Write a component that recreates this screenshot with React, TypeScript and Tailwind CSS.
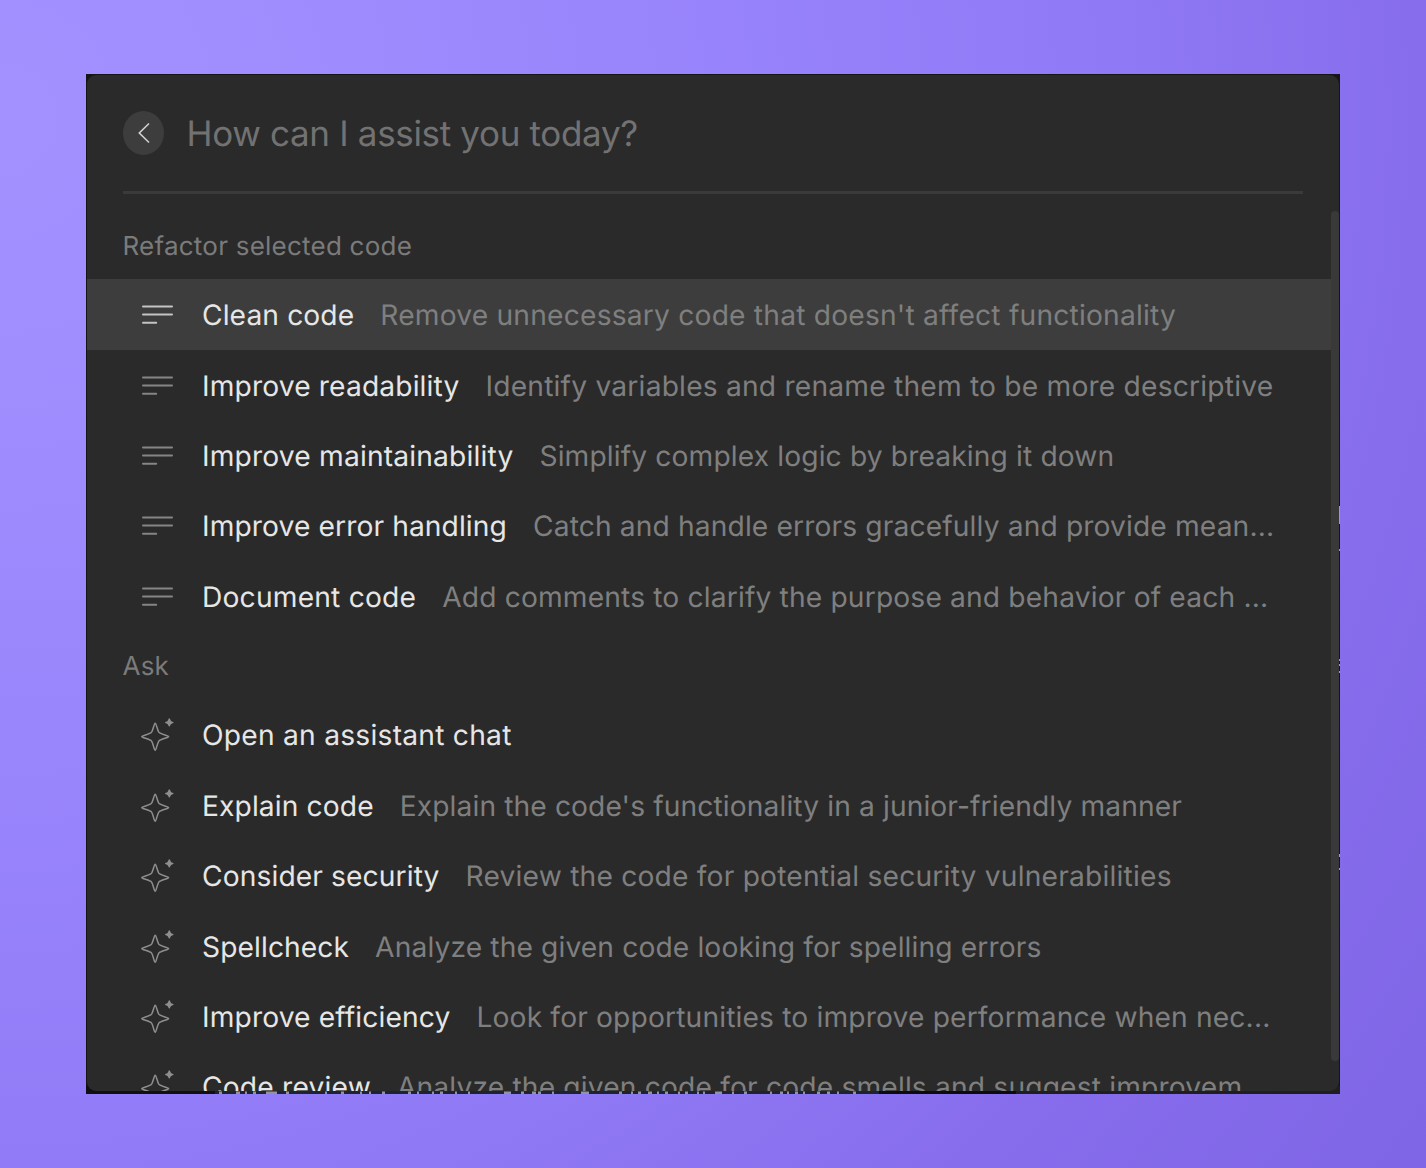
import React from "react";

// tracking: [title, description] letter spacing in pixels
type Item = { title: string; desc?: string; tracking: [number, number] };

const refactorItems: Item[] = [
  { title: "Clean code", desc: "Remove unnecessary code that doesn't affect functionality", tracking: [0.1, 0.2] },
  { title: "Improve readability", desc: "Identify variables and rename them to be more descriptive", tracking: [0.14, 0.2] },
  { title: "Improve maintainability", desc: "Simplify complex logic by breaking it down", tracking: [0.17, 0.13] },
  { title: "Improve error handling", desc: "Catch and handle errors gracefully and provide mean...", tracking: [0.1, 0.13] },
  { title: "Document code", desc: "Add comments to clarify the purpose and behavior of each ...", tracking: [0.19, 0.155] },
];

const askItems: Item[] = [
  { title: "Open an assistant chat", tracking: [0.24, 0] },
  { title: "Explain code", desc: "Explain the code's functionality in a junior-friendly manner", tracking: [0.11, 0.11] },
  { title: "Consider security", desc: "Review the code for potential security vulnerabilities", tracking: [0.11, 0.2] },
  { title: "Spellcheck", desc: "Analyze the given code looking for spelling errors", tracking: [0.09, 0.12] },
  { title: "Improve efficiency", desc: "Look for opportunities to improve performance when nec...", tracking: [0.13, 0.155] },
  { title: "Code review", desc: "Analyze the given code for code smells and suggest improvem", tracking: [0.19, 0.165] },
];

function LinesIcon({ active }: { active: boolean }) {
  return (
    <svg
      width="36"
      height="36"
      viewBox="0 0 36 36"
      fill="none"
      strokeWidth="2"
      strokeLinecap="round"
      className={active ? "stroke-[#c4c4c4]" : "stroke-[#858585]"}
    >
      <path d="M4 10.4H33M4 18.4H33M4 26.8H17.2" />
    </svg>
  );
}

function SparkleIcon() {
  return (
    <svg width="36" height="36" viewBox="0 0 36 36" fill="none" className="text-[#8e8e8e]">
      <path
        d="M16.2 7.2C17.2 7.2 18.2 13.5 19.8 16.1C21.2 18.1 29.6 19.7 29.6 20.7C29.6 21.7 21.4 23.1 19.8 25.1C18.1 27.6 17.2 34.3 16.2 34.3C15.2 34.3 14.2 27.6 12.6 25.1C11 23.1 2.8 21.7 2.8 20.7C2.8 19.7 11.2 18.1 12.6 16.1C14.2 13.5 15.2 7.2 16.2 7.2Z"
        stroke="currentColor"
        strokeWidth="1.5"
        strokeLinejoin="round"
      />
      <path
        d="M30.3 2.2C31 2.2 31.4 4.3 32.1 4.9C32.7 5.5 34.6 5.7 34.6 6.5C34.6 7.3 32.7 7.5 32.1 8.1C31.4 8.7 31 10.8 30.3 10.8C29.6 10.8 29.2 8.7 28.5 8.1C27.9 7.5 26 7.3 26 6.5C26 5.7 27.9 5.5 28.5 4.9C29.2 4.3 29.6 2.2 30.3 2.2Z"
        fill="currentColor"
      />
    </svg>
  );
}

function Row({ item, icon, active = false }: { item: Item; icon: React.ReactNode; active?: boolean }) {
  return (
    <div
      className={
        "flex h-[70.35px] shrink-0 items-center whitespace-pre pl-[52px] text-[28.2px] leading-[36px] " +
        (active ? "bg-[#3d3d3d]" : "")
      }
    >
      <span className="w-[36px] shrink-0">{icon}</span>
      <span className="ml-[27px] mt-[2px] text-[#e6e6e6]" style={{ letterSpacing: item.tracking[0] }}>
        {item.title}
      </span>
      {item.desc && (
        <span className="ml-[26px] mt-[2px] text-[#7f7f7f]" style={{ letterSpacing: item.tracking[1] }}>
          {item.desc}
        </span>
      )}
    </div>
  );
}

// Slivers of the editor behind the palette, as [offset, length] along the edge.
const bottomMarks: [number, number][] = [
  [4, 3], [21, 4], [30, 2], [38, 3], [51, 11], [71, 3], [110, 2], [126, 3], [145, 2], [154, 2], [167, 3],
  [193, 3], [202, 2], [217, 2], [225, 3], [240, 2], [253, 2], [289, 7], [306, 3], [317, 4], [323, 3],
  [337, 2], [366, 8], [404, 3], [416, 2], [423, 3], [433, 4], [442, 2], [450, 3], [463, 2], [470, 3],
  [482, 2], [488, 2], [500, 7], [517, 2], [529, 3], [555, 2], [565, 3], [572, 2], [580, 3], [588, 2],
  [602, 3], [612, 3], [622, 2], [638, 3],
];
const rightMarks: [number, number][] = [[432, 18], [475, 2], [585, 2], [590, 2], [597, 2], [780, 3], [794, 2]];

export default function App() {
  return (
    <div className="h-[1168px] w-[1426px] overflow-hidden bg-[radial-gradient(circle_at_0px_120px,#a391ff_0px,#a08eff_250px,#9580fa_850px,#8f78f4_1150px,#876dec_1420px,#7f66e6_1750px)] px-[86px] pt-[74px] font-[Inter,sans-serif] [text-rendering:geometricPrecision]">
      <div className="relative h-[1020px] w-[1254px] overflow-hidden bg-[#151515] px-px pt-px">
        <div className="absolute bottom-0 left-0 flex h-[8px] w-full">
          <div className="w-[129px] bg-[#101010]" />
          <div className="w-[664px] bg-[#1b2430]" />
          <div className="w-[137px] bg-[#0c0c0c]" />
          <div className="flex-1 bg-[#1f1f1f]" />
        </div>
        <svg className="absolute bottom-0 left-[129px]" width="664" height="3" fill="#8f959c">
          {bottomMarks.map(([x, w]) => (
            <rect key={x} x={x} y="0.5" width={w} height="2.5" />
          ))}
        </svg>
        <svg className="absolute right-0 top-0" width="1" height="1016" fill="#a0a0a0">
          {rightMarks.map(([y, h]) => (
            <rect key={y} x="0" y={y} width="1" height={h} />
          ))}
        </svg>
        <div className="relative flex h-[1016px] w-[1252px] flex-col overflow-hidden rounded-[9px] bg-[#2a2a2a]">
          <div className="flex h-[116px] shrink-0 items-center pl-[36px]">
            <button className="flex h-[44px] w-[41px] items-center justify-center rounded-[50%] bg-[#3d3d3d]">
              <svg width="20" height="24" viewBox="0 0 20 24" fill="none" stroke="#d0d0d0" strokeWidth="1.6">
                <path d="M15 2.5L5.3 12L15 21.5" />
              </svg>
            </button>
            <span className="ml-[22.5px] mt-[2px] whitespace-pre text-[35px] leading-[44px] tracking-[-0.33px] text-[#727272]">
              How can I assist you today?
            </span>
          </div>
          <div className="ml-[36px] h-[3px] w-[1180px] shrink-0 bg-[#3a3a3a]" />
          <div className="flex h-[85.2px] shrink-0 items-center pl-[35.5px] pt-[19px] text-[26px] tracking-[0.23px] text-[#7b7b7b]">
            Refactor selected code
          </div>
          {refactorItems.map((item, i) => (
            <Row key={item.title} item={item} active={i === 0} icon={<LinesIcon active={i === 0} />} />
          ))}
          <div className="flex h-[68.4px] shrink-0 items-center pl-[35.5px] pt-[2px] text-[26px] tracking-[0.23px] text-[#7b7b7b]">Ask</div>
          {askItems.map((item) => (
            <Row key={item.title} item={item} icon={<SparkleIcon />} />
          ))}
          <div className="absolute right-0 top-[136px] h-[850px] w-[8px] rounded-full bg-[#393939]" />
        </div>
      </div>
    </div>
  );
}
